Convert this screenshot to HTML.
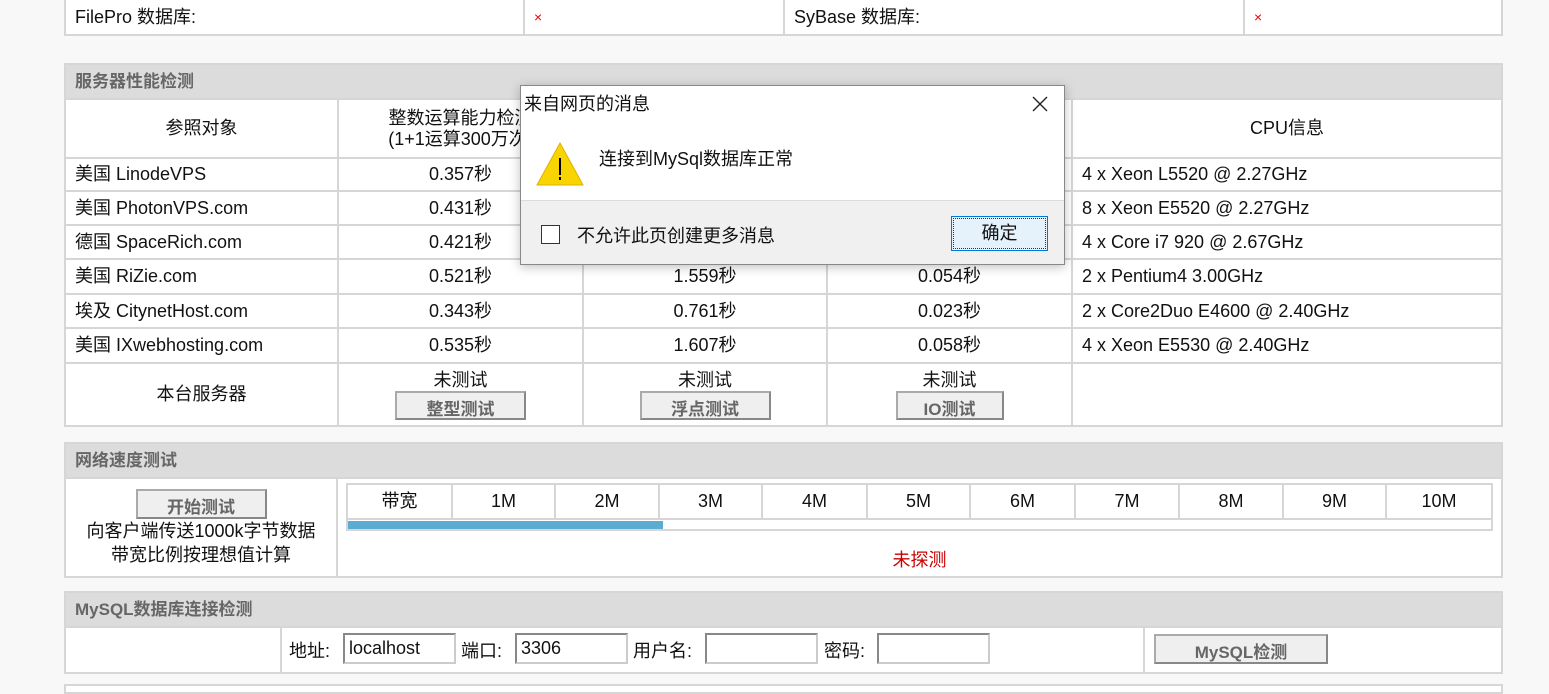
<!DOCTYPE html>
<html><head><meta charset="utf-8"><style>
*{box-sizing:border-box;margin:0;padding:0}
body{width:1549px;height:687px;overflow:hidden;background:#f8f8f8;font-family:"Liberation Sans","Noto Sans CJK SC",sans-serif;font-size:18px;color:#111;position:relative}
table{position:absolute;left:64px;width:1439px;border-collapse:collapse;table-layout:fixed;background:#fff}
td{border:2px solid #d6d6d6;text-align:center;padding:0;line-height:21px;white-space:nowrap;overflow:hidden}
td.l{text-align:left;padding-left:9px}
.h{background:#dcdcdc;color:#666;font-weight:bold;text-align:left;padding-left:9px;font-size:17px}
.btn{display:inline-block;height:29px;background:#efefef;border:2px solid #999;border-color:#aaa #888 #888 #aaa;color:#666;font-weight:bold;line-height:34px;overflow:hidden;font-size:17px;vertical-align:top;text-align:center}
.x{color:#e00;font-size:14px}
.inp{position:absolute;top:633px;height:31px;border:2px solid #999;border-color:#888 #ccc #ccc #888;background:#fff;padding-left:4px;line-height:26px}
.lab{position:absolute;top:640px;line-height:22px}
</style></head><body>
<table style="top:-2px"><colgroup><col style="width:459px"><col style="width:260px"><col style="width:460px"><col></colgroup><tr style="height:36px"><td class="l">FilePro 数据库:</td><td class="l"><span class="x">×</span></td><td class="l">SyBase 数据库:</td><td class="l"><span class="x">×</span></td></tr></table>

<table style="top:63px">
<colgroup><col style="width:273px"><col style="width:245px"><col style="width:244px"><col style="width:245px"><col></colgroup>
<tr style="height:35px"><td class="h" colspan="5">服务器性能检测</td></tr>
<tr style="height:59px"><td>参照对象</td><td>整数运算能力检测<br>(1+1运算300万次)</td><td>浮点运算能力检测<br>(圆周率计算300万次)</td><td>数据I/O能力检测<br>(读取10K文件1万次)</td><td>CPU信息</td></tr>
<tr style="height:33px"><td class="l">美国 LinodeVPS</td><td>0.357秒</td><td>0.802秒</td><td>0.023秒</td><td class="l">4 x Xeon L5520 @ 2.27GHz</td></tr>
<tr style="height:34px"><td class="l">美国 PhotonVPS.com</td><td>0.431秒</td><td>1.024秒</td><td>0.034秒</td><td class="l">8 x Xeon E5520 @ 2.27GHz</td></tr>
<tr style="height:34px"><td class="l">德国 SpaceRich.com</td><td>0.421秒</td><td>1.003秒</td><td>0.038秒</td><td class="l">4 x Core i7 920 @ 2.67GHz</td></tr>
<tr style="height:35px"><td class="l">美国 RiZie.com</td><td>0.521秒</td><td>1.559秒</td><td>0.054秒</td><td class="l">2 x Pentium4 3.00GHz</td></tr>
<tr style="height:34px"><td class="l">埃及 CitynetHost.com</td><td>0.343秒</td><td>0.761秒</td><td>0.023秒</td><td class="l">2 x Core2Duo E4600 @ 2.40GHz</td></tr>
<tr style="height:35px"><td class="l">美国 IXwebhosting.com</td><td>0.535秒</td><td>1.607秒</td><td>0.058秒</td><td class="l">4 x Xeon E5530 @ 2.40GHz</td></tr>
<tr style="height:63px"><td>本台服务器</td><td style="vertical-align:top;padding-top:6px">未测试<br><span class="btn" style="width:131px">整型测试</span></td><td style="vertical-align:top;padding-top:6px">未测试<br><span class="btn" style="width:131px">浮点测试</span></td><td style="vertical-align:top;padding-top:6px">未测试<br><span class="btn" style="width:108px">IO测试</span></td><td></td></tr>
</table>

<table style="top:442px">
<colgroup><col style="width:272px"><col></colgroup>
<tr style="height:35px"><td class="h" colspan="2">网络速度测试</td></tr>
<tr style="height:99px"><td style="vertical-align:top;padding-top:10px;line-height:24px"><span class="btn" style="width:131px;height:30px">开始测试</span><br>向客户端传送1000k字节数据<br>带宽比例按理想值计算</td><td style="vertical-align:top;position:relative">
<div style="position:absolute;left:8px;top:4px;width:1147px;height:48px;border:2px solid #d6d6d6;background:#fff"></div>
<div style="position:absolute;left:8px;top:4px;width:1147px;display:flex;height:37px;border:2px solid #d6d6d6;border-bottom:none">
<div style="width:105px;border-right:2px solid #d6d6d6;border-bottom:2px solid #d6d6d6;line-height:33px">带宽</div>
<div style="width:103px;border-right:2px solid #d6d6d6;border-bottom:2px solid #d6d6d6;line-height:33px">1M</div>
<div style="width:104px;border-right:2px solid #d6d6d6;border-bottom:2px solid #d6d6d6;line-height:33px">2M</div>
<div style="width:103px;border-right:2px solid #d6d6d6;border-bottom:2px solid #d6d6d6;line-height:33px">3M</div>
<div style="width:105px;border-right:2px solid #d6d6d6;border-bottom:2px solid #d6d6d6;line-height:33px">4M</div>
<div style="width:103px;border-right:2px solid #d6d6d6;border-bottom:2px solid #d6d6d6;line-height:33px">5M</div>
<div style="width:105px;border-right:2px solid #d6d6d6;border-bottom:2px solid #d6d6d6;line-height:33px">6M</div>
<div style="width:104px;border-right:2px solid #d6d6d6;border-bottom:2px solid #d6d6d6;line-height:33px">7M</div>
<div style="width:104px;border-right:2px solid #d6d6d6;border-bottom:2px solid #d6d6d6;line-height:33px">8M</div>
<div style="width:103px;border-right:2px solid #d6d6d6;border-bottom:2px solid #d6d6d6;line-height:33px">9M</div>
<div style="flex:1;border-bottom:2px solid #d6d6d6;line-height:33px">10M</div>
</div>
<div style="position:absolute;left:10px;top:42px;width:315px;height:8px;background:#5aacd2"></div>
<div style="position:absolute;left:0;right:0;top:71px;color:#c00;text-align:center">未探测</div>
</td></tr></table>

<table style="top:591px">
<colgroup><col style="width:216px"><col style="width:863px"><col></colgroup>
<tr style="height:35px"><td class="h" colspan="3">MySQL数据库连接检测</td></tr>
<tr style="height:46px"><td></td><td></td><td style="text-align:left;padding-left:9px;vertical-align:top;padding-top:6px"><span class="btn" style="width:174px;height:30px">MySQL检测</span></td></tr>
</table>
<span class="lab" style="left:289px">地址:</span><div class="inp" style="left:343px;width:113px">localhost</div>
<span class="lab" style="left:461px">端口:</span><div class="inp" style="left:515px;width:113px">3306</div>
<span class="lab" style="left:633px">用户名:</span><div class="inp" style="left:705px;width:113px"></div>
<span class="lab" style="left:824px">密码:</span><div class="inp" style="left:877px;width:113px"></div>
<div style="position:absolute;left:64px;top:684px;width:1439px;height:10px;border:2px solid #d6d6d6;background:#fff"></div>

<div style="position:absolute;left:520px;top:85px;width:545px;height:180px;background:#fff;border:1px solid #888;box-shadow:0 2px 10px rgba(0,0,0,.25)">
<div style="position:absolute;left:3px;top:7px;line-height:22px">来自网页的消息</div>
<svg style="position:absolute;left:510px;top:9px" width="18" height="18"><path d="M2 2L16 16M16 2L2 16" stroke="#222" stroke-width="1.4"/></svg>
<svg style="position:absolute;left:14px;top:55px" width="50" height="46"><polygon points="25,2 48,44 2,44" fill="#f8d400" stroke="#e0b000" stroke-width="1"/><rect x="24" y="17" width="2" height="17" fill="#000"/><rect x="24" y="36" width="2" height="3" fill="#000"/></svg>
<div style="position:absolute;left:78px;top:62px;line-height:22px">连接到MySql数据库正常</div>
<div style="position:absolute;left:0;right:0;top:114px;bottom:0;background:#f0f0f0;border-top:1px solid #dcdcdc">
<div style="position:absolute;left:20px;top:24px;width:19px;height:19px;border:1px solid #333;background:#fff"></div>
<div style="position:absolute;left:56px;top:24px;line-height:22px">不允许此页创建更多消息</div>
<div style="position:absolute;left:430px;top:15px;width:97px;height:35px;border:1px solid #0078d7;background:#e5f1fb;outline:1px dotted #333;outline-offset:-3px;text-align:center;line-height:32px">确定</div>
</div></div>
</body></html>
